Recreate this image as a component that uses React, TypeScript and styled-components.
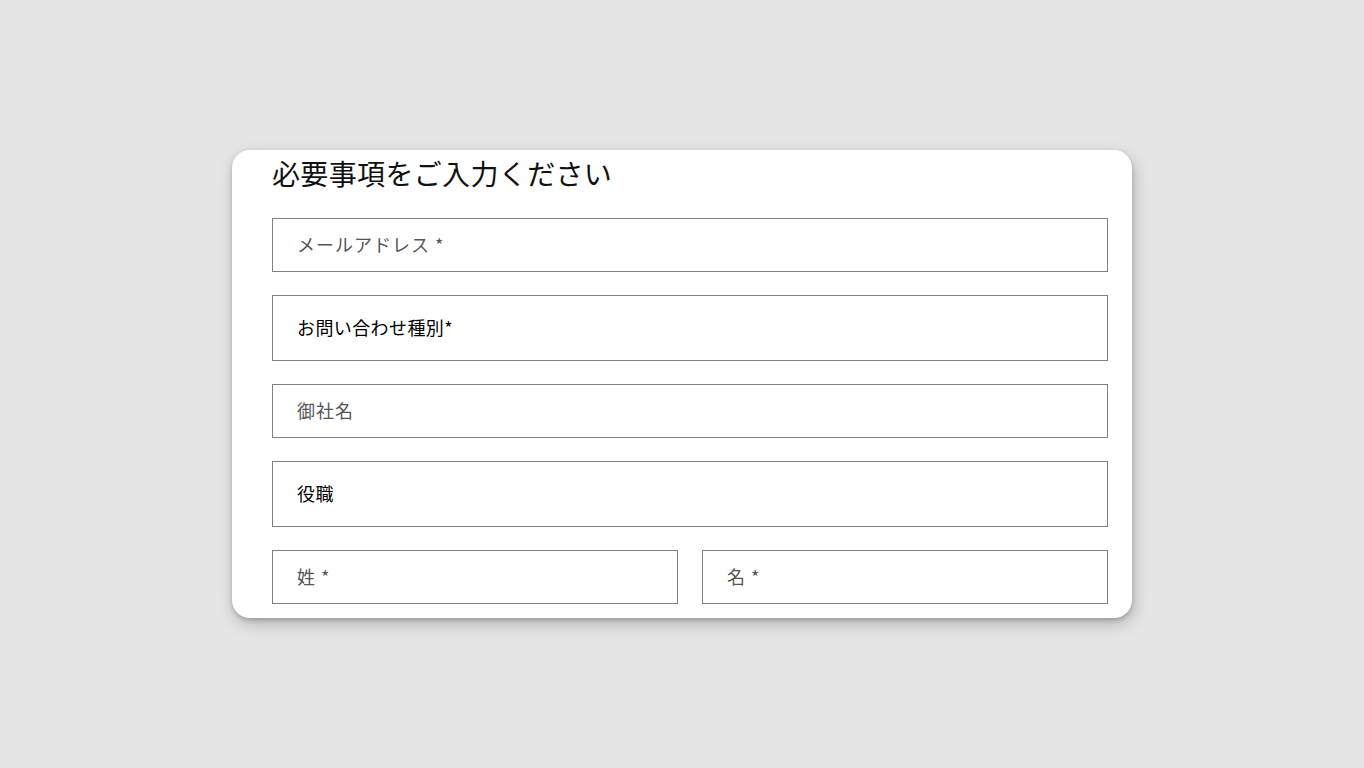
import styled, { createGlobalStyle } from "styled-components";

const GlobalStyle = createGlobalStyle`
  html, body {
    margin: 0;
    padding: 0;
    background: #e5e5e5;
    font-family: "Noto Sans CJK JP", "Noto Sans", sans-serif;
  }
  * {
    box-sizing: border-box;
  }
`;

export default function App() {
  return (
    <>
      <GlobalStyle />
      <Page>
        <Card>
          <Title>必要事項をご入力ください</Title>
          <Form>
            <TextField placeholder="メールアドレス *" />
            <SelectField>お問い合わせ種別*</SelectField>
            <TextField placeholder="御社名" />
            <SelectField>役職</SelectField>
            <NameRow>
              <TextField placeholder="姓 *" />
              <TextField placeholder="名 *" />
            </NameRow>
          </Form>
        </Card>
      </Page>
    </>
  );
}

const Page = styled.div`
  display: flex;
  align-items: center;
  justify-content: center;
  width: 100%;
  height: 768px;
`;

const Card = styled.div`
  display: flex;
  flex-direction: column;
  width: 900px;
  height: 468px;
  padding: 5px 24px 14px 40px;
  background: #ffffff;
  border-radius: 18px;
  box-shadow: 0 2px 4px rgba(0, 0, 0, 0.18), 2px 6px 16px rgba(0, 0, 0, 0.22);
`;

const Title = styled.h1`
  margin: 0 0 27px;
  font-size: 28px;
  line-height: 36px;
  font-weight: 400;
  letter-spacing: 0.35px;
  color: #111111;
`;

const Form = styled.div`
  display: flex;
  flex-direction: column;
  gap: 23px;
`;

const TextField = styled.input`
  width: 100%;
  height: 54px;
  padding: 0 24px 3px;
  border: 1px solid #808080;
  border-radius: 0;
  outline: none;
  background: #ffffff;
  font-family: inherit;
  font-size: 18px;
  letter-spacing: 1px;
  color: #222222;

  &::placeholder {
    color: #555555;
  }
`;

const SelectField = styled.div`
  display: flex;
  align-items: center;
  height: 66px;
  padding: 0 24px 3px;
  border: 1px solid #808080;
  font-size: 18px;
  letter-spacing: 0.4px;
  color: #000000;
`;

const NameRow = styled.div`
  display: grid;
  grid-template-columns: 1fr 1fr;
  gap: 24px;
`;
